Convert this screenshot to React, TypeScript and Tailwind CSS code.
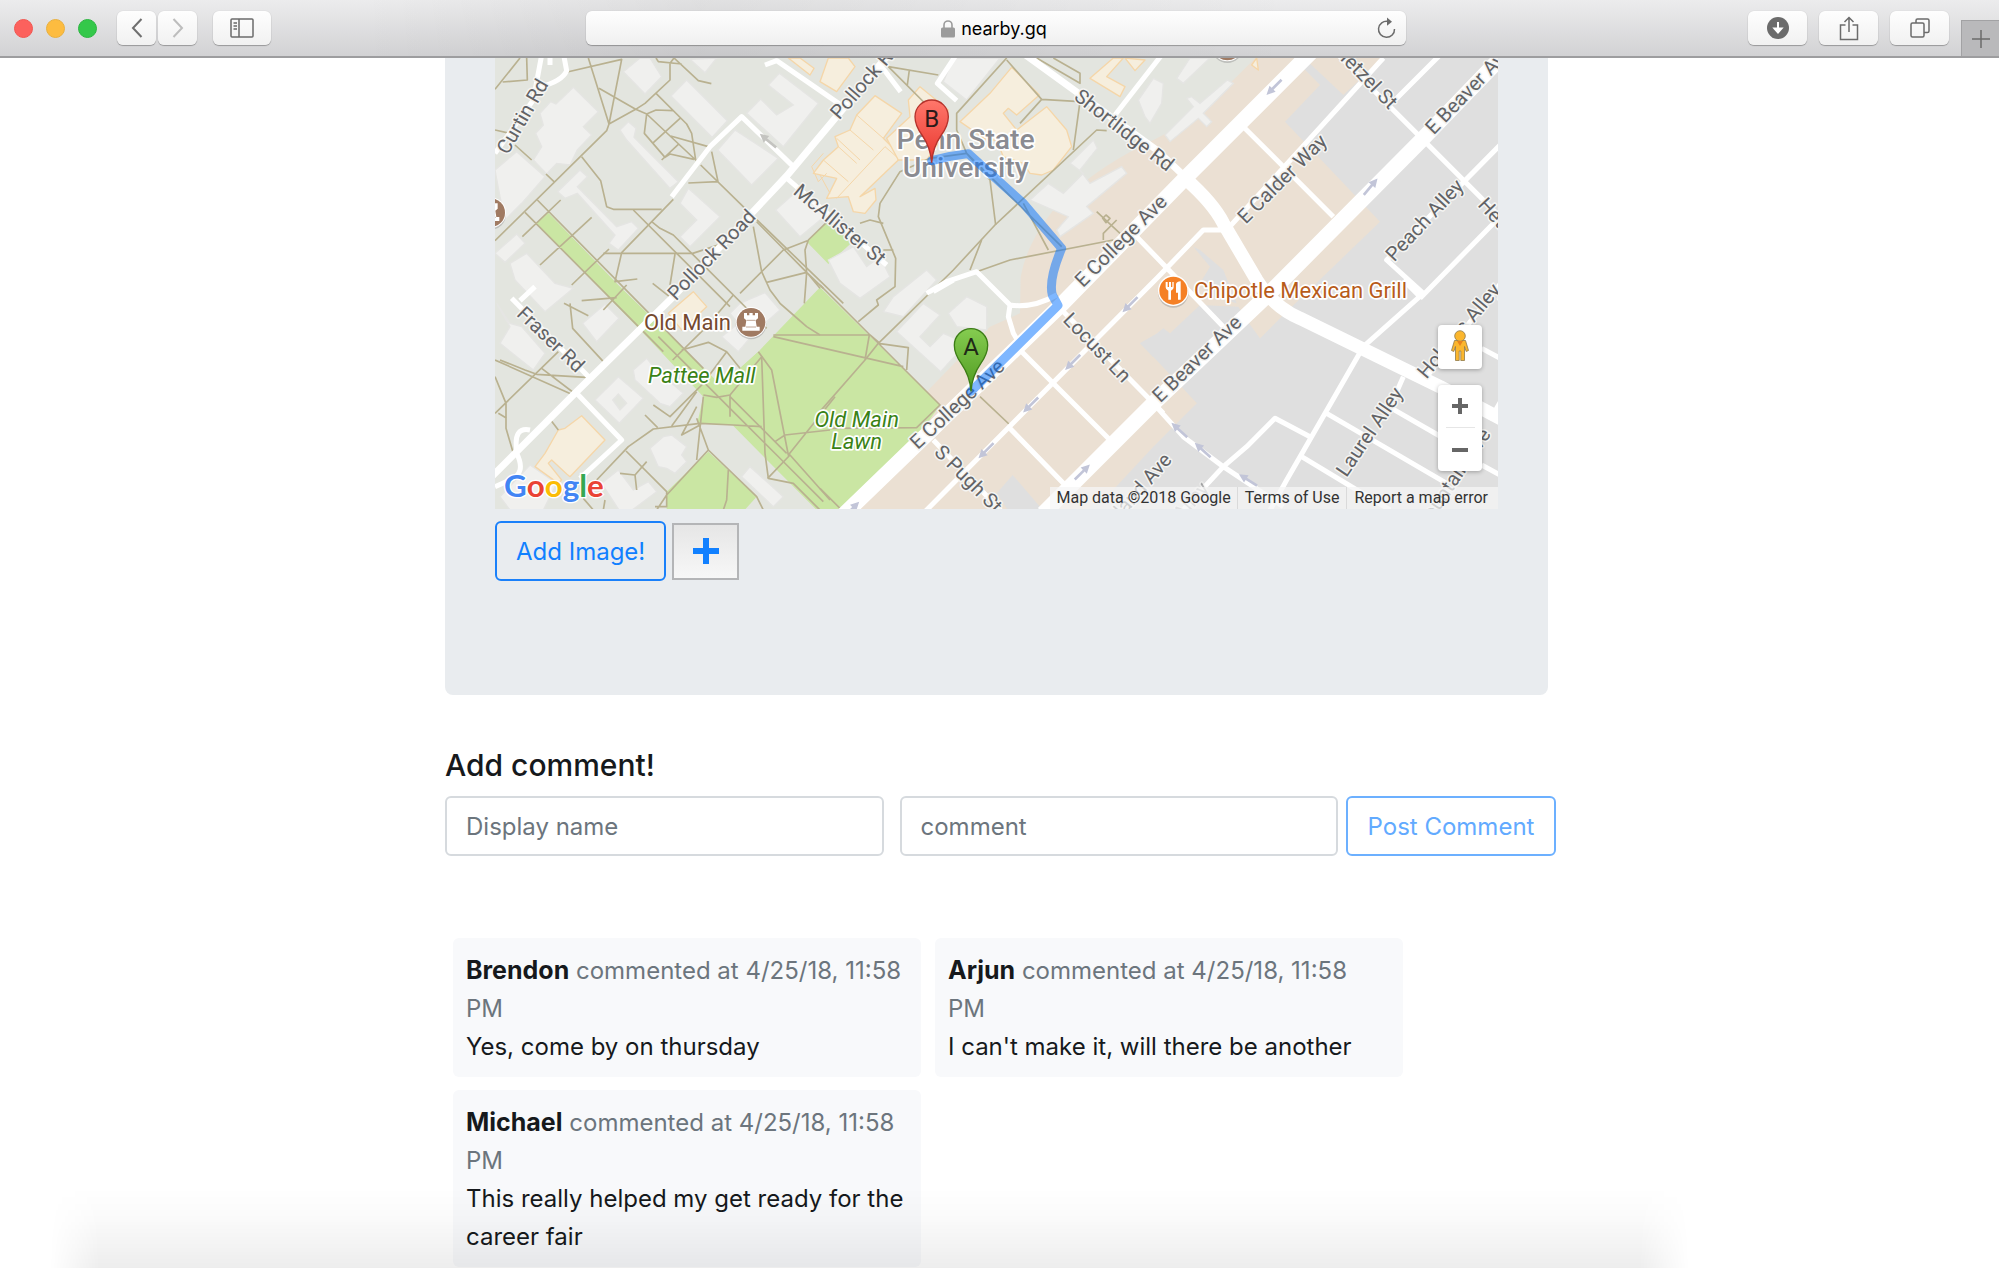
import React from "react";

const UI_FONT = "font-['Inter','Liberation_Sans',sans-serif]";

/* ---------- browser toolbar ---------- */

const chromeButton =
  "flex h-[34px] items-center justify-center rounded-md bg-linear-to-b from-[#fefefe] to-[#f1f1f1] shadow-[0_1px_1px_rgba(0,0,0,0.28),0_0_1px_rgba(0,0,0,0.2)]";

function Toolbar() {
  return (
    <header className="relative z-10 flex h-[58px] items-start border-b-2 border-[#9d9d9f] bg-linear-to-b from-[#ececed] to-[#d2d2d4]">
      <div className="absolute inset-0 bg-linear-to-r from-transparent from-18% via-black/5 via-35% to-transparent to-65%" />
      <div className="relative flex w-[586px] shrink-0 items-center pt-[11px] pl-[14px]">
        <div className="flex gap-[13px]">
          <button aria-label="Close" className="size-[19px] rounded-full border border-[#f25650] bg-[#fc615d]" />
          <button aria-label="Minimize" className="size-[19px] rounded-full border border-[#e9b03e] bg-[#fdbc40]" />
          <button aria-label="Full screen" className="size-[19px] rounded-full border border-[#2bb640] bg-[#34c84a]" />
        </div>
        <div className="ml-5 flex gap-0.5">
          <button aria-label="Back" className={`${chromeButton} w-[39px]`}>
            <svg width="12" height="20" viewBox="0 0 12 20" fill="none" stroke="#6f6f6f" strokeWidth="2">
              <path d="M10.500 1L2 10l8.500 9" />
            </svg>
          </button>
          <button aria-label="Forward" className={`${chromeButton} w-[39px]`}>
            <svg width="12" height="20" viewBox="0 0 12 20" fill="none" stroke="#bdbdbd" strokeWidth="2">
              <path d="M1.500 1L10 10l-8.500 9" />
            </svg>
          </button>
        </div>
        <button aria-label="Show sidebar" className={`${chromeButton} ml-4 w-[58px]`}>
          <svg width="24" height="20" viewBox="0 0 24 20" fill="none" stroke="#6b6b6b" strokeWidth="1.500">
            <rect x="1" y="1" width="22" height="18" rx="1" />
            <path d="M9 1v18M3.500 5H7M3.500 8H7M3.500 11H7" />
          </svg>
        </button>
      </div>
      <div className="relative mt-[11px] flex h-[34px] min-w-0 flex-1 items-center justify-center rounded-md bg-linear-to-b from-[#fefefe] to-[#f0f0f0] pt-0.5 pr-1 shadow-[0_1px_1px_rgba(0,0,0,0.28),0_0_1px_rgba(0,0,0,0.2)]">
        <svg className="mr-1.5" width="14" height="18" viewBox="0 0 14 18" fill="none">
          <rect x="0" y="7.500" width="14" height="10" rx="1.500" fill="#9b9b9b" />
          <path d="M3 8V5a4 4 0 0 1 8 0v3" stroke="#9b9b9b" strokeWidth="1.600" />
        </svg>
        <a href="#" className="text-[18px] leading-6 text-black">nearby.gq</a>
        <button aria-label="Reload" className="absolute top-1.5 right-[9px]">
          <svg width="21" height="22" viewBox="0 0 21 22" fill="none" stroke="#6b6b6b" strokeWidth="1.500">
            <path d="M12 4.500a8 8 0 1 0 6.500 7.500" />
            <path d="M11 0.500l5 4.300-5 4z" fill="#6b6b6b" stroke="none" />
          </svg>
        </button>
      </div>
      <div className="relative flex w-[593px] shrink-0 justify-end">
        <div className="flex gap-3 pt-[11px]">
          <button aria-label="Downloads" className={`${chromeButton} w-[59px]`}>
            <svg width="22" height="22" viewBox="0 0 22 22">
              <circle cx="11" cy="11" r="11" fill="#6b6b6b" />
              <path d="M11 5v7M7.500 11.500L11 15.500l3.500-4z" stroke="#fff" strokeWidth="2" fill="#fff" />
            </svg>
          </button>
          <button aria-label="Share" className={`${chromeButton} w-[59px]`}>
            <svg width="20" height="25" viewBox="0 0 20 25" fill="none" stroke="#6b6b6b" strokeWidth="1.500">
              <path d="M6.500 9H1.500v14.500h17V9h-5M10 16V2M5.500 6L10 1.500 14.500 6" />
            </svg>
          </button>
          <button aria-label="Show all tabs" className={`${chromeButton} w-[59px]`}>
            <svg width="20" height="20" viewBox="0 0 20 20" fill="none" stroke="#6b6b6b" strokeWidth="1.500">
              <rect x="1" y="5" width="13" height="14" rx="1.500" />
              <path d="M6 5V2.500A1.500 1.500 0 0 1 7.500 1h10A1.500 1.500 0 0 1 19 2.500V13a1.500 1.500 0 0 1-1.500 1.500H14" />
            </svg>
          </button>
        </div>
        <button
          aria-label="New tab"
          className="mt-5 ml-3 flex h-9 w-[38px] items-center justify-center border-t border-l border-[#a2a2a4] bg-[#b9b9bb]"
        >
          <svg width="18" height="18" viewBox="0 0 18 18" stroke="#6b6b6b" strokeWidth="1.500">
            <path d="M9 0v18M0 9h18" />
          </svg>
        </button>
      </div>
    </header>
  );
}

/* ---------- map drawing (three drawing units per pixel) ---------- */

const mapLabels: { t: string; x: number; y: number; a: number; anchor?: "start" | "end"; dim?: boolean }[] = [
  { t: "Curtin Rd", x: 97, y: 199, a: -60 },
  { t: "Pollock Road", x: 664, y: 614, a: -46 },
  { t: "Pollock Rd", x: 1032, y: 198, a: -49, anchor: "start" },
  { t: "McAllister St", x: 1050, y: 523, a: 40 },
  { t: "Fraser Rd", x: 183, y: 868, a: 44 },
  { t: "Shortlidge Rd", x: 1903, y: 240, a: 38 },
  { t: "E College Ave", x: 1892, y: 572, a: -45 },
  { t: "E Calder Way", x: 2376, y: 386, a: -45 },
  { t: "Hetzel St", x: 2712, y: 166, a: 46, anchor: "end" },
  { t: "E Beaver Ave", x: 2816, y: 242, a: -46, anchor: "start" },
  { t: "Peach Alley", x: 2803, y: 510, a: -47 },
  { t: "Hetzel St", x: 2976, y: 452, a: 47, anchor: "start" },
  { t: "Holmes Alley", x: 2906, y: 842, a: -50 },
  { t: "E College Ave", x: 1401, y: 1062, a: -43 },
  { t: "S Pugh St", x: 1436, y: 1286, a: 45 },
  { t: "Locust Ln", x: 1822, y: 892, a: 46 },
  { t: "E Beaver Ave", x: 2120, y: 926, a: -44 },
  { t: "Highland Ave", x: 2032, y: 1218, a: -49, anchor: "end" },
  { t: "Calder Alley", x: 2144, y: 1304, a: -49, anchor: "end", dim: true },
  { t: "Laurel Alley", x: 2638, y: 1145, a: -56 },
  { t: "Mountain Ave", x: 2782, y: 1444, a: -56, anchor: "start" },
];

const arrows: [number, number, number][] = [
  [2352, 112, 135], [2642, 410, -50], [1920, 764, 135], [1748, 937, 135], [1622, 1065, 135],
  [1488, 1202, 135], [1777, 1266, -45], [2068, 1140, 222], [2138, 1200, 222], [2274, 1290, 212], [1085, 1378, -45],
];

function Rook({ x, y }: { x: number; y: number }) {
  return (
    <g transform={`translate(${x} ${y})`}>
      <circle cy="5" r="46" fill="#888" opacity="0.4" />
      <circle r="46" fill="#fff" />
      <circle r="43" fill="#a07a62" />
      <path d="M-21-28h9v7h7v-7h10v7h7v-7h9v16l-7 6 3 19h9v12h-52v-12h9l3-19-7-6z" fill="#fff" />
      <path d="M-13-6H13M-15 14H15" stroke="#a07a62" strokeWidth="2" />
    </g>
  );
}

function MapDrawing() {
  return (
    <svg viewBox="15 24 3009 1353" className="block h-auto w-full" role="img" aria-label="Walking route map">
      <defs>
        <linearGradient id="pinRed" x1="0" y1="0" x2="0" y2="1">
          <stop offset="0" stopColor="#ff776b" />
          <stop offset="1" stopColor="#e8362e" />
        </linearGradient>
        <linearGradient id="pinGreen" x1="0" y1="0" x2="0" y2="1">
          <stop offset="0" stopColor="#85cc50" />
          <stop offset="1" stopColor="#4f9a20" />
        </linearGradient>
      </defs>
      <rect x="0" y="0" width="3040" height="1400" fill="#e3e5df" />

      {/* districts */}
      <path
        d="M2300 20L2190 130Q2100 220 1960 285Q1800 365 1690 480Q1610 580 1592 680L1590 790 1500 830 1310 1025 1350 1070 1050 1390H3040V20z"
        fill="#ebe0d3"
      />
      <path
        d="M2410 24L2490 105 2385 215 2670 515 2380 795 2310 865 2270 810 2245 770 2130 765 2040 850 2020 835 1995 855 1950 880 2120 1060 1925 1250 1840 1330 1780 1390H3040V20z"
        fill="#dfdfdf"
      />
      <path d="M2470 50L2560 135 2680 24H2440zM2230 740L2310 865 2430 740zM1990 920L2120 1060 1990 1190 1860 1330 1700 1380z" fill="#ebe0d3" />
      <path d="M2110 590L2160 650 2130 700 2170 740 2240 760 2200 660 2130 600zM1520 1330L1568 1275 1650 1370 1640 1390H1560zM2010 845L1950 880 2010 940z" fill="#dfdfdf" />

      {/* lawns */}
      <path
        d="M175 488L140 520 460 850 640 1040 622 1118 728 1126 990 1390H1060L1262 1190 1350 1065 990 712 805 905 750 955 718 1030 385 705z"
        fill="#cae6a3"
      />
      <path d="M655 1205L530 1325V1390H755L800 1340zM950 575L1015 512 1085 578 1015 642z" fill="#cae6a3" />
      <path d="M640 1040L718 1030 760 1000 805 905 750 955z" fill="#cae6a3" />

      {/* buildings */}
      <g fill="#f0f0ee" stroke="#e5e5e3" strokeWidth="4">
        <path d="M400 65L450 24H480L515 80 465 132zM250 112L325 185 280 230 305 255 262 300 240 345 200 340 170 372 130 330 155 290 137 250 160 225 150 190 182 155 198 162z" />
        <path d="M590 90L712 212 666 262 543 138zM415 215L438 235 432 262 565 395 540 415 410 270 390 240zM15 360L80 305 165 380 95 460 45 510 30 440z" />
        <path d="M270 360L292 380 262 410 380 530 425 515 445 535 385 600 357 580 375 555 262 430 225 445 203 425zM15 610L80 552 105 580 45 637zM595 415L690 500 600 590 570 560 620 510 570 460z" />
        <path d="M735 240L865 325 785 405 683 300zM868 70L985 160 880 290 770 190 812 147 860 195 910 165 835 105zM600 28L645 68 680 24zM930 415L1015 490 930 560 857 480z" />
        <path d="M60 640L110 610 195 700 250 715 165 785 75 690zM20 760L60 820 95 830 165 910 130 960 30 880 60 830zM345 763L387 805 320 875 278 820z" />
        <path d="M430 960L470 925 500 960 580 1030 540 1070 510 1060 435 990zM385 980L460 1045 388 1120 315 1050z" />
        <path d="M368 1050L385 1032 410 1060 390 1080z" fill="#e3e5df" />
        <path d="M545 1155L590 1190 575 1215 590 1235 555 1270 530 1255 505 1250 480 1195 520 1160zM385 1260L430 1320 475 1295 500 1325 400 1400 335 1300zM780 1250L880 1340 850 1370 755 1280zM30 1340L120 1245 200 1300 160 1380H60z" />
        <path d="M825 728L870 780 830 815 775 870 745 905 695 860 745 820 720 790 750 760zM1390 24H1530L1430 150 1360 95zM1015 630L1090 590 1130 650 1170 620 1200 680 1110 745 1050 700zM1310 660L1340 690 1240 800 1180 785 1210 740z" />
        <path d="M1300 760L1350 795 1290 860 1320 890 1360 850 1430 880 1352 965 1220 845zM1430 740L1490 770 1490 840 1400 830 1375 790z" />
        <path d="M1810 270L1822 295 1770 360 1800 400 1895 350 1910 370 1790 470 1810 490 1710 560 1700 540 1735 500 1620 450 1675 400 1720 430 1780 370 1740 340zM2100 24H2160L2080 100 2060 85zM2212 90L2230 100 2140 190 2165 215 2150 230 2125 205 2040 275 2025 255 2110 170 2090 145 2105 140 2130 160zM1945 150L1990 85 2020 100 2015 160 1980 220 1965 200z" />
      </g>
      <g fill="#f6eedd" stroke="#f5d6a8" strokeWidth="4" strokeLinejoin="round">
        <path d="M1015 24H1075L1095 50 1040 125 990 95zM895 24L960 75 972 55 930 24z" />
        <path d="M1155 137L1235 190 1180 265 1215 300 1225 330 1110 440 1155 415 1158 450 1125 490 1090 485 1075 440 1010 445 1040 385 970 370 1000 330 1045 290 1035 260 1080 240 1100 195z" />
        <path d="M1100 195L1180 265M1080 240L1150 300M1040 265L1110 330M1000 330L1075 395M1045 290L1100 340M1225 325L1185 290 1040 445" fill="none" strokeWidth="3" />
        <path d="M1290 110L1375 180 1355 265 1310 330H1225L1190 265 1260 200 1255 150zM1565 52L1648 135 1580 195 1555 175 1540 190 1580 240 1670 170 1730 240 1745 290 1690 360 1655 375 1620 370 1600 340 1540 320 1520 270 1490 270 1410 215 1500 130z" />
        <path d="M1870 24L1800 85 1890 140 1905 110 1850 80 1900 24zM1905 24L1935 62 1965 30zM2300 24L2285 45 2305 60zM275 1097L345 1170 240 1280 230 1272 185 1230 175 1240 215 1290 205 1300 135 1250 165 1210 205 1140 225 1135zM610 725L650 770 575 840 535 790z" />
        <path d="M1000 310L965 350 985 395 1010 370M990 375L1020 430" fill="none" strokeWidth="3" />
      </g>

      {/* footpaths */}
      <g fill="none" stroke="#b9b190" strokeWidth="5" strokeLinejoin="round">
        <path d="M15 118L90 24M38 96L112 90 110 24M232 66L395 28 357 222 295 24M327 115L437 178 465 160 540 90V40L552 24M498 24L505 35 575 42M552 24L625 92 664 101M437 178L357 222 350 242 15 572M75 285L125 330M168 372L195 398M15 240L60 250" />
        <path d="M437 178L470 192 498 180 550 182M498 130L590 222 605 250 617 330 470 192 463 250 525 322 540 312 612 328M490 278L570 205M542 258L655 290M515 330L565 283M665 305L684 395 595 399M632 345L765 475 1060 760M275 320L332 392 350 470 370 478H515M550 448L395 608 375 695 442 687M340 610H608L700 580" />
        <path d="M430 480L720 770M485 515L510 535 550 555 830 835M555 612L540 705M142 450L640 955M105 487L520 905M212 450L97 560M305 502L150 645M357 597L245 705M790 530L815 665 840 720 870 760 910 795 950 830 990 855M750 730L880 600 952 572M830 697L950 667 990 715M950 667L945 600 955 570 1015 512M1000 715L950 667 800 515M950 667L943 760M488 700L545 745" />
        <path d="M240 760L248 835 340 935M222 760L295 797M275 752L380 743M340 780L410 705M15 930L250 1035 182 1110 205 1140M15 1090L205 905M30 930L105 960 140 973 300 983M15 980L48 1060V1135L70 1210M25 1090L50 1105M155 955L260 1035" />
        <path d="M320 1290L415 1190 490 1137 630 1120 730 1125 815 1130M545 1128L620 1025M465 1095L503 1133M490 1065L540 1100 640 1000 710 905M575 900L655 877 710 905 750 955M548 930L650 830 730 735M505 860L735 1090 860 1215 1000 1355M640 1035L680 1042 720 1035 815 920 825 1210 835 1285 910 1300 990 1380" />
        <path d="M805 905L845 960 895 1215 1035 1040M640 1040L620 1230M720 1035V1100M620 1105L655 1200 530 1335 500 1380M655 1200L800 1340 820 1380M620 1070L575 1155 630 1125M408 1203L530 1325V1370H495M715 1260L710 1350 700 1380M390 1270L435 1275 470 1235M435 1275L440 1320M280 1345L310 1380M345 1350L340 1380M833 1285L900 1215 1020 1350M855 1175L885 1155 1020 1140M720 1040L890 1210" />
        <path d="M850 855H1140L1170 880M850 860L1240 950M990 705L1350 1065 1280 1133 1020 1135M1165 880L1390 660 1515 525 1820 240 1850 242M1165 880L1255 893 1250 960M1138 855L1125 930 985 1090M1165 880L1125 930M1105 815L1165 765 1160 750 1215 710 1217 625 1165 500 1170 460 1230 365 1320 325 1430 310" />
        <path d="M1110 520L1140 510 1180 520M1180 600H1210M1195 50L1345 75M1195 50L1310 165M1258 60L1252 105M1550 24L1400 190V240L1430 310 1500 390 1517 525M1550 30L1655 148 1770 155 1750 300M1655 148L1590 220M1640 24L1770 100V70L1690 24M1600 460L1675 600M1430 310L1715 590M1440 660L1475 570M1460 665L1560 630 1870 570M1820 485L1890 550M1840 570V550L1880 510M1848 495L1860 505 1848 518 1838 505zM1470 1040L1560 1125M990 1315L1055 1380" />
      </g>

      {/* streets */}
      <g fill="none" stroke="#fff" strokeWidth="15" strokeLinejoin="round">
        <path d="M1300 1390L2005 680 2140 540H2210L2680 24M2260 230L2530 500M2540 10L3040 510M2715 150L2850 15M3040 275L2690 630 2800 730 2620 890 2390 1290 2335 1390M3030 500L2790 745M2740 690L2790 740M2510 1090L2870 1300M2435 1220L2700 1380M2460 1160L2355 1105 2270 1190 2200 1250 2070 1390M1990 1060L2080 1160 2200 1250 2380 1370M2740 980L2705 1060M2705 1075L2870 1170M2975 1245L3040 1280M2975 895L3040 930M2810 980L3040 690M3000 1110L3040 1040" />
        <path d="M1710 775L2020 1090M1590 900L1860 1170M1555 1130L1720 1300M1330 1170L1540 1390M1940 560L2200 830" />
        <path d="M1310 730L1370 695 1460 665 1560 765 1555 800 1570 850 1600 900M1560 765Q1630 775 1700 735M1330 725L1390 690" />
        <path d="M545 440L660 290 755 200 910 350M885 380L1190 645M825 45L860 32 1060 170M180 45V20M1175 50L1232 125M1395 20L1342 100 1400 152M2015 15L1875 195M155 15L130 150 15 310M222 20L230 62Q215 95 150 110M260 1030L395 1170 270 1285M65 745L300 985M135 710L90 752M80 1200Q70 1130 120 1140M80 1210Q110 1270 60 1290L15 1310" />
      </g>
      <g fill="none" stroke="#fff" strokeLinejoin="round">
        <path d="M0 1285L255 1030 545 745 890 378 1190 20M1600 10L2000 300 2090 385" strokeWidth="21" />
        <path d="M2085 385Q2170 460 2200 520L2300 690Q2350 770 2430 805L2850 1010 3040 1110" strokeWidth="40" />
        <path d="M1055 1400L1720 758 2080 390 2470 0M1660 1390L1990 1060 2330 738 2790 275 3050 5" strokeWidth="46" />
      </g>

      {arrows.map(([x, y, a]) => (
        <path key={`${x}-${y}`} transform={`translate(${x} ${y}) rotate(${a})`} d="M-32-4H6V-13L32 0 6 13V4H-32z" fill="#c2c5d8" />
      ))}
      <path transform="translate(834 272) rotate(220)" d="M-32-4H6V-13L32 0 6 13V4H-32z" fill="#c4c4c0" />

      {/* street names */}
      <g
        fontFamily="Roboto, sans-serif"
        fontSize="60"
        fill="#626366"
        stroke="#f4f4f2"
        strokeWidth="9"
        strokeLinejoin="round"
        paintOrder="stroke"
      >
        {mapLabels.map((l) => (
          <text
            key={`${l.t}-${l.x}`}
            transform={`translate(${l.x} ${l.y}) rotate(${l.a})`}
            dy="21"
            textAnchor={l.anchor ?? "middle"}
            opacity={l.dim ? 0.5 : 1}
          >
            {l.t}
          </text>
        ))}
      </g>

      {/* place names */}
      <g fontFamily="Roboto, sans-serif" stroke="#fff" strokeWidth="10" strokeLinejoin="round" paintOrder="stroke">
        <g fontSize="85" fontWeight="500" fill="#8a8b91" textAnchor="middle">
          <text x="1427" y="296">Penn State</text>
          <text x="1427" y="381">University</text>
        </g>
        <text x="462" y="839" fontSize="66" fill="#75492f">Old Main</text>
        <g fontSize="66" fontStyle="italic" fill="#3a8216">
          <text x="474" y="998">Pattee Mall</text>
          <text x="1100" y="1131" textAnchor="middle">Old Main</text>
          <text x="1100" y="1197" textAnchor="middle">Lawn</text>
        </g>
        <text x="2112" y="744" fontSize="66" fill="#b75b1a">Chipotle Mexican Grill</text>
      </g>
      <Rook x={783} y={817} />
      <Rook x={2} y={488} />
      <Rook x={2212} y={-12} />
      <g transform="translate(2050 722)">
        <circle cy="5" r="46" fill="#888" opacity="0.4" />
        <circle r="46" fill="#fff" />
        <circle r="42" fill="#f58025" />
        <path d="M-23-26v16q0 8 8 10v27h8V0q8-2 8-10v-16h-4v15h-4v-15h-6v15h-4v-15zM8-20q3-8 14-8v55h-8V6H8z" fill="#fff" />
      </g>

      {/* route */}
      <path
        d="M1325 332L1380 319 1435 311 1600 460 1715 595Q1675 690 1687 735L1704 766 1443 1024"
        fill="none"
        stroke="#0070ff"
        strokeOpacity="0.5"
        strokeWidth="27"
        strokeLinecap="round"
        strokeLinejoin="round"
      />
      <g fontFamily="Roboto, sans-serif" fontSize="72" textAnchor="middle">
        <path d="M1325 338Q1322 292 1296 255 1275 226 1275 200A50 50 0 0 1 1375 200Q1375 226 1354 255 1328 292 1325 338z" fill="url(#pinRed)" stroke="#b5332c" strokeWidth="4" />
        <text x="1325" y="230" fill="#2a1a19">B</text>
        <path d="M1443 1024Q1440 978 1414 941 1393 912 1393 886A50 50 0 0 1 1493 886Q1493 912 1472 941 1446 978 1443 1024z" fill="url(#pinGreen)" stroke="#3c7d16" strokeWidth="4" />
        <text x="1443" y="915" fill="#1f2a17">A</text>
      </g>

      <text x="42" y="1341" fontFamily="Lato, sans-serif" fontSize="94" fontWeight="700" stroke="#fff" strokeWidth="8" paintOrder="stroke">
        <tspan fill="#4285f4">G</tspan>
        <tspan fill="#ea4335">o</tspan>
        <tspan fill="#fbbc05">o</tspan>
        <tspan fill="#4285f4">g</tspan>
        <tspan fill="#34a853">l</tspan>
        <tspan fill="#ea4335">e</tspan>
      </text>
    </svg>
  );
}

function MapPanel() {
  return (
    <div className="relative overflow-hidden">
      <MapDrawing />
      <div className="absolute right-4 bottom-[38px] flex w-11 flex-col gap-4">
        <button aria-label="Street View" className="flex h-11 items-center justify-center rounded-sm bg-white pb-1 shadow-[0_1px_4px_rgba(0,0,0,0.3)]">
          <svg width="18" height="31" viewBox="0 0 18 31" fill="#fbb62d" stroke="#8f7a4a" strokeWidth="0.800">
            <path d="M3.500 10.500h11l3 10-2.300 1-1.700-5v14H9.800V21H8.200v9.500H4.500v-14l-1.700 5-2.300-1z" />
            <circle cx="9" cy="6" r="5.300" />
            <path d="M6 11l3 5 3-5z" fill="#e8821e" stroke="none" />
          </svg>
        </button>
        <div className="flex flex-col items-center rounded-sm bg-white shadow-[0_1px_4px_rgba(0,0,0,0.3)]">
          <button aria-label="Zoom in" className="flex h-[42px] w-full items-center justify-center">
            <svg width="16" height="16" viewBox="0 0 16 16" fill="#666"><path d="M6 0h4v6h6v4h-6v6H6v-6H0V6h6z" /></svg>
          </button>
          <div className="h-px w-[29px] bg-[#e6e6e6]" />
          <button aria-label="Zoom out" className="flex h-[43px] w-full items-center justify-center">
            <svg width="16" height="4" viewBox="0 0 16 4" fill="#666"><path d="M0 0h16v4H0z" /></svg>
          </button>
        </div>
      </div>
      <div className="absolute right-0 bottom-0 flex h-[22px] items-center bg-[#f5f5f5]/75 font-['Roboto',sans-serif] text-[16px] leading-[22px] whitespace-nowrap text-[#333]">
        <span className="px-1.5">Map data ©2018 Google</span>
        <a href="#" className="border-l border-[#dadada] px-[7px]">Terms of Use</a>
        <a href="#" className="border-l border-[#dadada] pr-2.5 pl-[7px]">Report a map error</a>
      </div>
    </div>
  );
}

/* ---------- page ---------- */

const comments = [
  { name: "Brendon", when: "4/25/18, 11:58 PM", text: "Yes, come by on thursday" },
  { name: "Arjun", when: "4/25/18, 11:58 PM", text: "I can't make it, will there be another" },
  { name: "Michael", when: "4/25/18, 11:58 PM", text: "This really helped my get ready for the career fair" },
];

const fieldClass =
  "h-[60px] min-w-0 flex-1 rounded-md border-2 border-[#d6dade] bg-white px-[19px] text-[24px] text-[#495057] placeholder:text-[#6c757d]";

export default function App() {
  return (
    <div className={`${UI_FONT} relative h-screen overflow-hidden bg-white text-[#16191c]`}>
      <Toolbar />
      <main className="pr-1.5">
        <div className="mx-auto max-w-[1103px]">
          <section className="rounded-b-lg bg-[#e9ecef] px-[50px] pb-[114px]">
            <MapPanel />
            <div className="flex items-center gap-1.5 pt-3">
              <button className="h-[60px] rounded-md border-2 border-[#1a80fa] px-[19px] pt-0.5 text-[24px] text-[#1180ff]">Add Image!</button>
              <button aria-label="Add" className="flex h-[57px] w-[67px] items-center justify-center border-2 border-[#b4b5b7] bg-linear-to-b from-[#e6e6e6] to-[#f7f7f7]">
                <svg width="26" height="26" viewBox="0 0 26 26" fill="#1180ff"><path d="M10 0h6v10h10v6H16v10h-6V16H0v-6h10z" /></svg>
              </button>
            </div>
          </section>

          <h4 className="mt-[50px] text-[30px] leading-10 font-medium">Add comment!</h4>
          <form className="-mr-2 mt-[11px] flex" onSubmit={(e) => e.preventDefault()}>
            <input aria-label="Display name" placeholder="Display name" className={fieldClass} />
            <input aria-label="comment" placeholder="comment" className={`${fieldClass} ml-4`} />
            <button className="ml-2 h-[60px] w-[210px] rounded-md border-2 border-[#6cb0ff] pt-0.5 text-[24px] whitespace-nowrap text-[#62aaff]">
              Post Comment
            </button>
          </form>

          <ul className="mt-[82px] flex flex-wrap items-start gap-x-3.5 gap-y-[13px] pl-2">
            {comments.map((c) => (
              <li key={c.name} className="w-[468px] rounded-md bg-[#f8f9fb] pt-[13px] pr-2 pb-[11px] pl-[13px] text-[24px] leading-[38px]">
                <p className="pr-2.5 text-[#6c757d]">
                  <strong className="text-[25px] leading-[38px] font-bold text-[#16191c]">{c.name}</strong> commented at {c.when}
                </p>
                <p>{c.text}</p>
              </li>
            ))}
          </ul>
        </div>
      </main>
      <div className="pointer-events-none absolute bottom-0 left-[50px] h-20 w-[82%] bg-linear-to-b from-transparent via-black/2 via-40% to-black/7 mask-x-from-97%" />
    </div>
  );
}
